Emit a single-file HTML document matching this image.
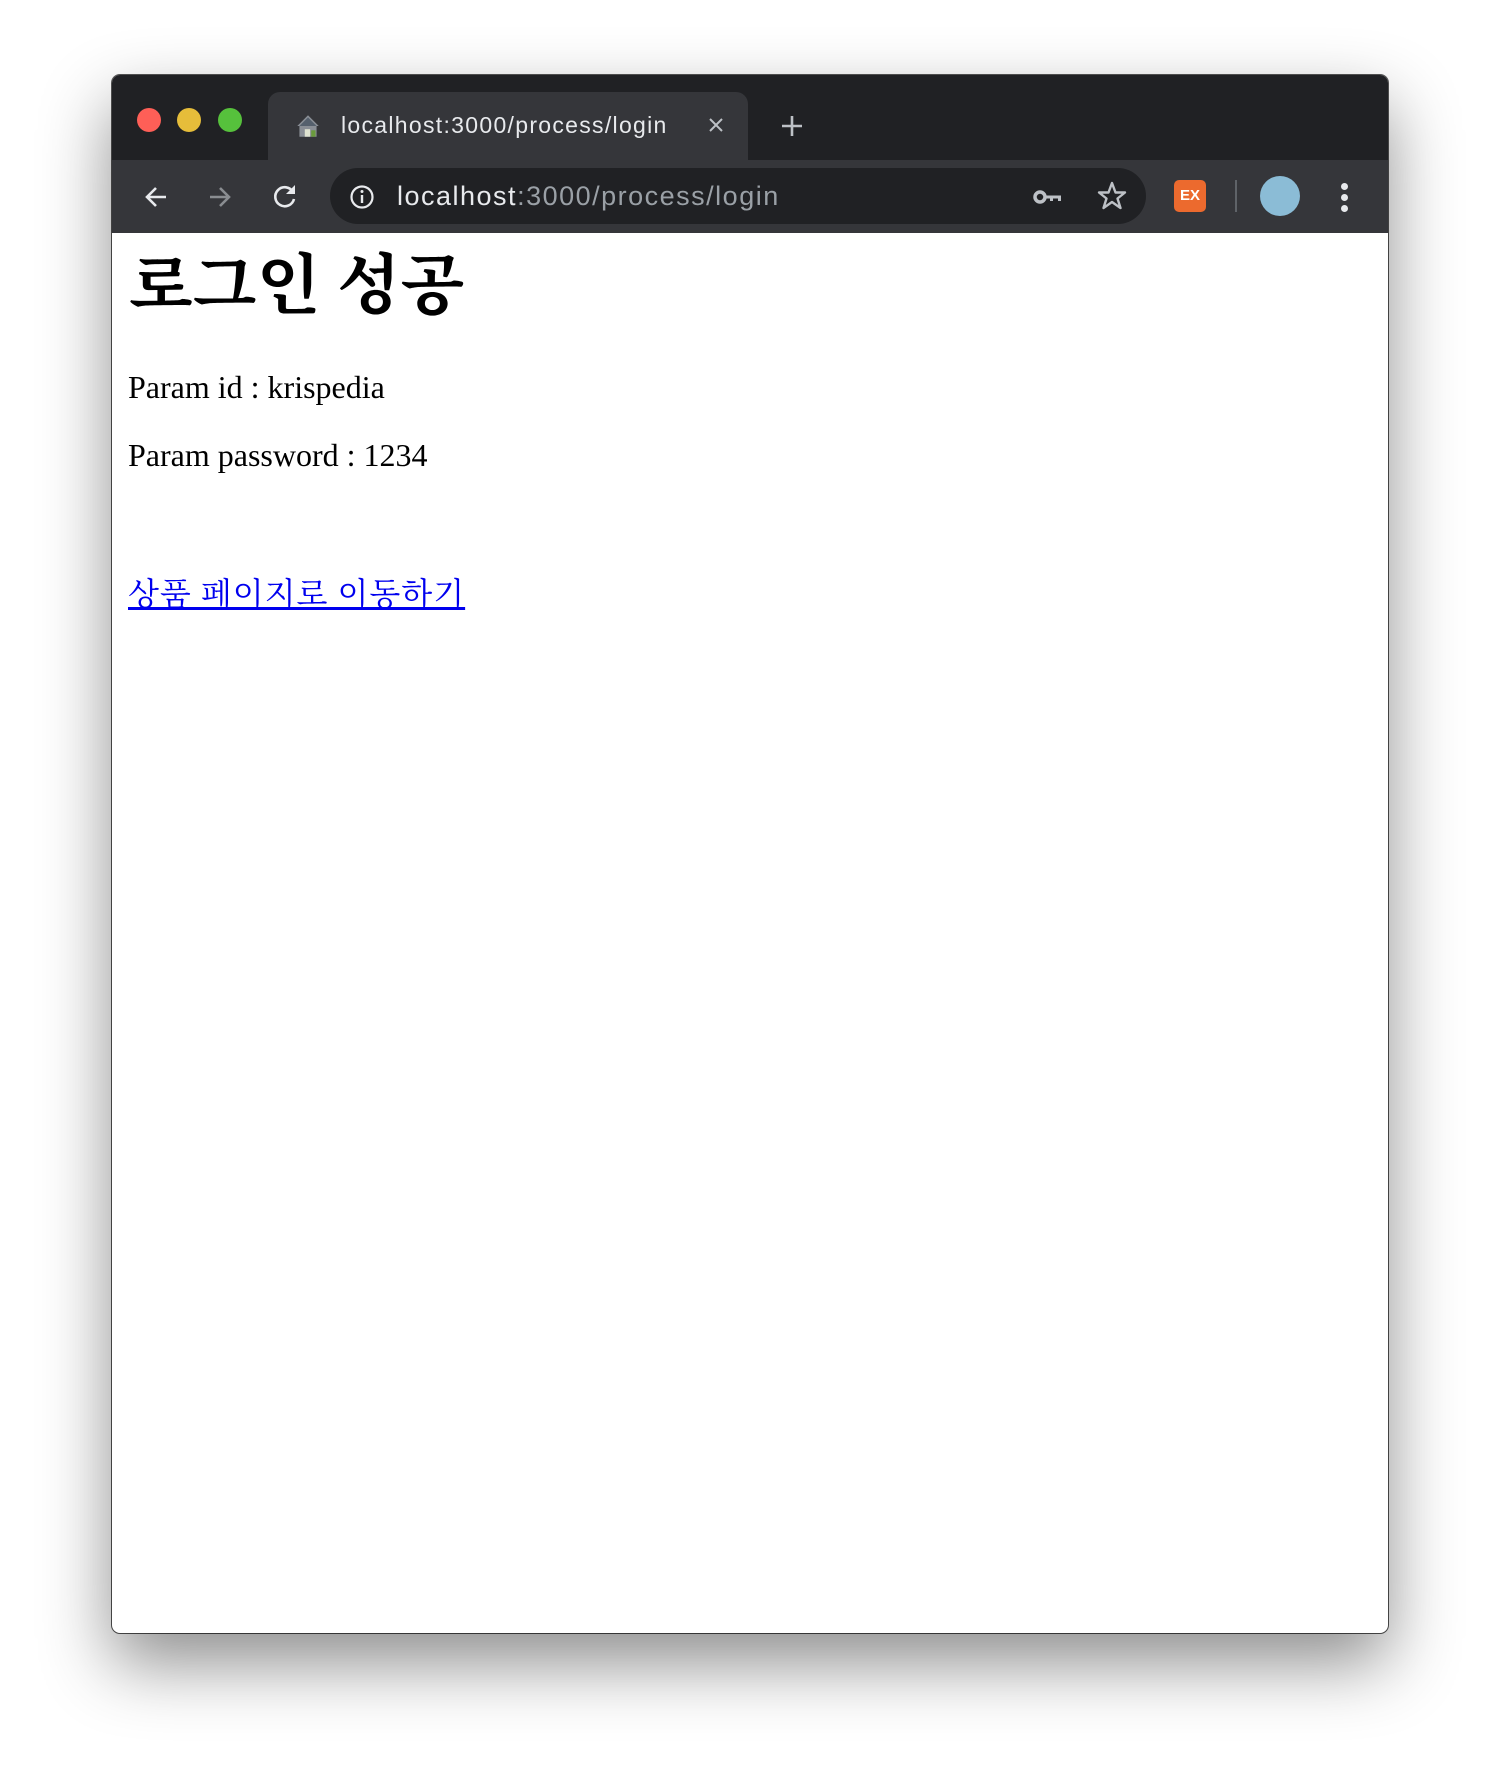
<!DOCTYPE html>
<html><head><meta charset="utf-8"><style>
*{margin:0;padding:0;box-sizing:border-box}
body{width:1500px;height:1778px;background:#fff;position:relative;overflow:hidden;font-family:"Liberation Sans",sans-serif}
.win{position:absolute;left:112px;top:75px;width:1276px;height:1558px;border-radius:8px;background:#fff;overflow:hidden;box-shadow:0 30px 70px rgba(0,0,0,.45),0 0 0 1px #555}
.tabs{position:absolute;left:0;top:0;width:100%;height:85px;background:#202124}
.tb{position:absolute;left:0;top:85px;width:100%;height:73px;background:#35363a}
.dot{position:absolute;top:33px;width:24px;height:24px;border-radius:50%}
.tab{position:absolute;left:156px;top:17px;width:480px;height:70px;background:#35363a;border-radius:12px 12px 0 0}
.tt{position:absolute;color:#e8eaed;white-space:nowrap}
.omni{position:absolute;left:218px;top:93px;width:816px;height:56px;border-radius:28px;background:#202124}
.content{position:absolute;left:0;top:158px;width:100%;font-family:"Liberation Serif","Noto Serif CJK SC",serif;color:#000}
</style></head><body>
<div class="win">
<div class="tabs"></div>
<div class="dot" style="left:25px;background:#fe5f57"></div>
<div class="dot" style="left:65px;background:#e6bd3a"></div>
<div class="dot" style="left:106px;background:#56c13c"></div>
<div class="tab"></div>
<svg style="position:absolute;left:181px;top:36px" width="30" height="30" viewBox="0 0 28 28"><path d="M4 14 L14 4 L24 14 L22 14 L22 24 L6 24 L6 14Z" fill="#8a8f96"/><path d="M6 14 L14 6 L22 14" fill="#55606d"/><rect x="11" y="17" width="5" height="7" fill="#dfe3d0"/><rect x="17" y="18" width="4" height="6" fill="#6a9b3c"/></svg>
<div class="tt" style="left:229px;top:36px;font-size:23px;line-height:28px;letter-spacing:1.3px">localhost:3000/process/login</div>
<svg style="position:absolute;left:596px;top:42px" width="16" height="16"><path d="M2 2L14 14M14 2L2 14" stroke="#bdc1c6" stroke-width="2"/></svg>
<svg style="position:absolute;left:668px;top:39px" width="24" height="24"><path d="M12 2V22M2 12H22" stroke="#bdc1c6" stroke-width="2.6"/></svg>
<div class="tb"></div>
<svg style="position:absolute;left:30px;top:108px" width="28" height="28"><path d="M24 14H5M14 5L5 14L14 23" stroke="#e8eaed" stroke-width="2.6" fill="none"/></svg>
<svg style="position:absolute;left:94px;top:108px" width="28" height="28"><path d="M4 14H23M14 5L23 14L14 23" stroke="#8a8d91" stroke-width="2.6" fill="none"/></svg>
<svg style="position:absolute;left:159px;top:107px" width="28" height="28"><path d="M22 10A9.5 9.5 0 1 0 23 17" stroke="#e8eaed" stroke-width="2.6" fill="none"/><path d="M24 3V12H15Z" fill="#e8eaed"/></svg>
<div class="omni"></div>
<svg style="position:absolute;left:237px;top:109px" width="26" height="26"><circle cx="13" cy="13" r="10.5" stroke="#e8eaed" stroke-width="2.2" fill="none"/><rect x="11.8" y="11" width="2.4" height="8" fill="#e8eaed"/><circle cx="13" cy="7.5" r="1.5" fill="#e8eaed"/></svg>
<div class="tt" style="left:285px;top:93px;line-height:56px;font-size:27px;letter-spacing:1.5px">localhost<span style="color:#9aa0a6">:3000/process/login</span></div>
<svg style="position:absolute;left:921px;top:112px" width="30" height="20"><circle cx="7" cy="10" r="5" stroke="#bdc1c6" stroke-width="3.5" fill="none"/><path d="M12 8.5H28V14H25V11.5H20V14H17V11.5H12Z" fill="#bdc1c6"/></svg>
<svg style="position:absolute;left:984px;top:105px" width="32" height="32"><path d="M16 3L19.5 12.5H29L21.5 18.5L24.5 28L16 22L7.5 28L10.5 18.5L3 12.5H12.5Z" stroke="#bdc1c6" stroke-width="2.4" fill="none" stroke-linejoin="round"/></svg>
<div style="position:absolute;left:1062px;top:105px;width:32px;height:32px;border-radius:5px;background:#ec6a2e;color:#fff;font-weight:bold;font-size:15px;text-align:center;line-height:32px">EX</div>
<div style="position:absolute;left:1123px;top:105px;width:2px;height:32px;background:#5f6368"></div>
<div style="position:absolute;left:1148px;top:101px;width:40px;height:40px;border-radius:50%;background:#8bbcd6"></div>
<div style="position:absolute;left:1229px;top:108px;width:7px;height:7px;border-radius:50%;background:#e8eaed;box-shadow:0 11px 0 #e8eaed,0 22px 0 #e8eaed"></div>
<div class="content">
<div style="position:absolute;left:17px;top:15px;font-size:66px;line-height:78px;font-weight:bold">로그인 성공</div>
<div style="position:absolute;left:16px;top:134px;font-size:32px;line-height:40px">Param id : krispedia</div>
<div style="position:absolute;left:16px;top:202px;font-size:32px;line-height:40px">Param password : 1234</div>
<div style="position:absolute;left:16px;top:341px;font-size:32px;line-height:40px;color:#0000ee;text-decoration:underline;letter-spacing:1px">상품 페이지로 이동하기</div>
</div>
</div>
</body></html>
